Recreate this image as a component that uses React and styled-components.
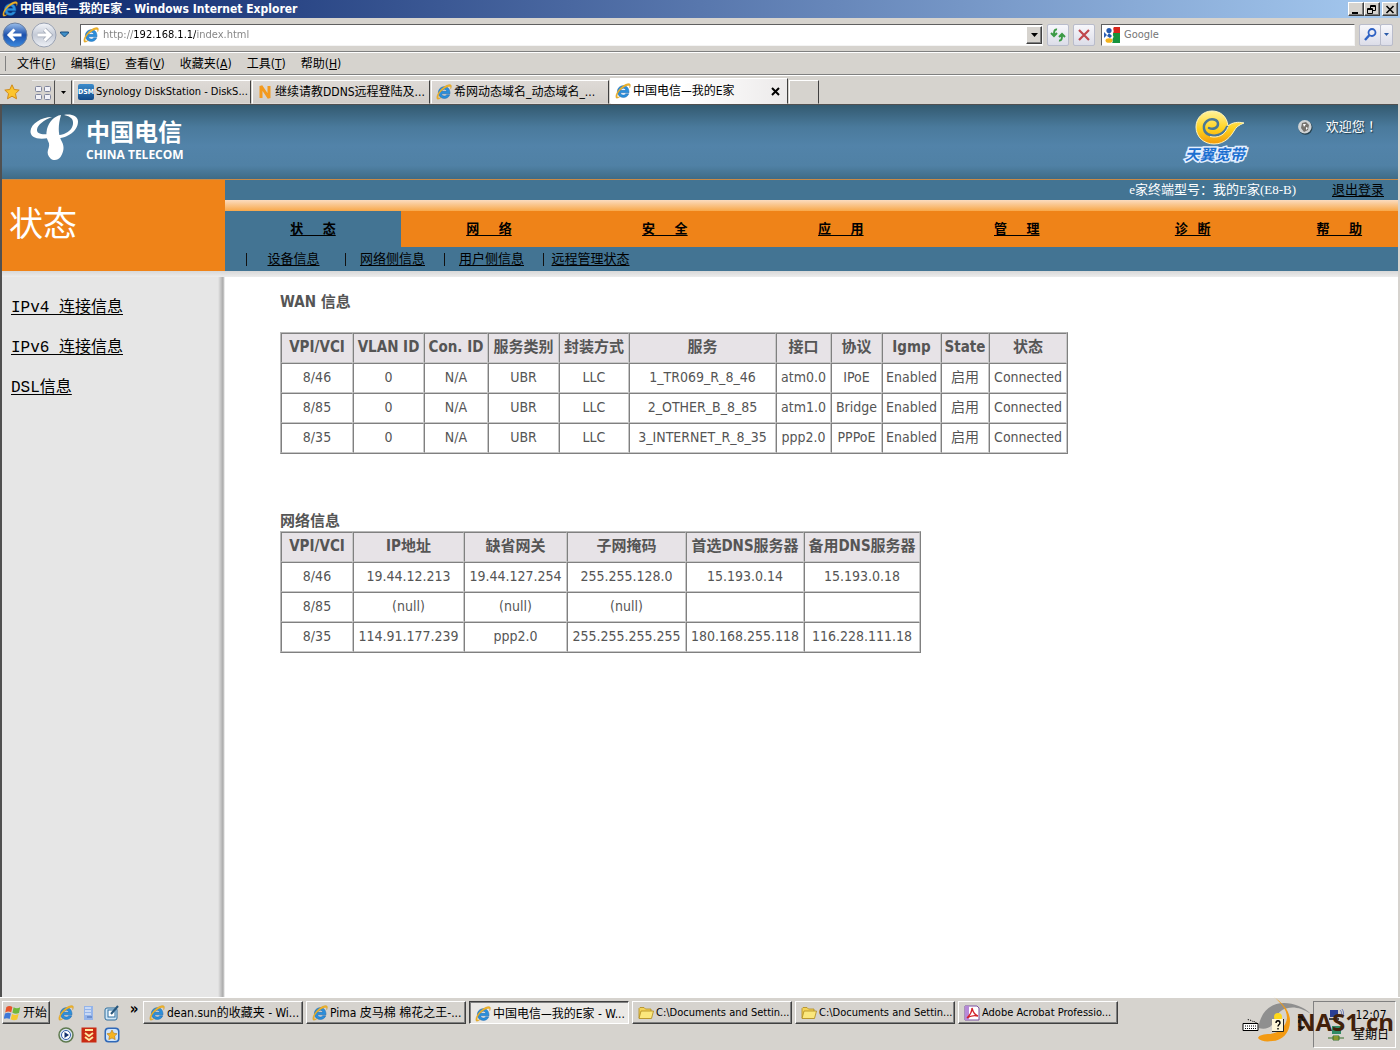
import React from 'react';
import styled, { createGlobalStyle, css } from 'styled-components';

const ui = `'DejaVu Sans Condensed', 'Noto Sans CJK SC', sans-serif`;
const song = `'Liberation Serif', 'Noto Sans CJK SC', serif`;
const face = '#d6d3ce';

const Global = createGlobalStyle`
  * { box-sizing: border-box; }
  body { margin: 0; background: ${face}; font: 11px/16px ${ui}; color: #000; }
  button, input { font: inherit; color: inherit; margin: 0; padding: 0; border: 0; background: none; }
  svg { display: block; flex: none; }
`;

const raised = css`
  background: ${face};
  border: 1px solid;
  border-color: #fff #404040 #404040 #fff;
  box-shadow: inset -1px -1px 0 #808080;
`;

const Window = styled.div`
  min-height: 100vh;
  display: flex;
  flex-direction: column;
`;

/* ---------- browser chrome ---------- */
const TitleBar = styled.header`
  height: 18px;
  display: flex;
  align-items: center;
  gap: 2px;
  padding: 0 2px;
  background: linear-gradient(90deg, #0a246a, #a6caf0);
`;
const Title = styled.h1`
  margin: 0;
  flex: 1;
  font: bold 12px/16px ${ui};
  color: #fff;
`;
const WinButtons = styled.div`
  display: flex;
  button:last-child { margin-left: 2px; }
`;
const WinButton = styled.button`
  ${raised}
  width: 16px;
  height: 14px;
  display: grid;
  place-items: center;
`;
const AddressRow = styled.div`
  height: 34px;
  display: flex;
  align-items: center;
  padding: 0 7px 0 2px;
  border-bottom: 1px solid #808080;
`;
const History = styled.div`
  display: flex;
  align-items: center;
  gap: 3px;
  margin-right: 11px;
`;
const Plain = styled.button`
  display: grid;
  place-items: center;
`;
const Field = styled.div`
  height: 22px;
  display: flex;
  align-items: center;
  gap: 4px;
  padding-left: 2px;
  background: #fff;
  border: 1px solid;
  border-color: #606060 #f4f4f4 #f4f4f4 #606060;
  ${p => p.$grow ? 'flex: 1;' : 'width: 254px; margin-left: 6px;'}
`;
const FieldInput = styled.input`
  flex: 1;
  min-width: 0;
  height: 20px;
  outline: 0;
  font-size: 11px;
  color: #777;
`;
const UrlInput = styled(FieldInput)`
  color: transparent;
  background: linear-gradient(90deg, #808080 31px, #000 31px, #000 93px, #808080 93px);
  background-clip: text;
  -webkit-background-clip: text;
`;
const DropButton = styled.button`
  ${raised}
  width: 16px;
  height: 18px;
  display: grid;
  place-items: center;
`;
const ToolButton = styled.button`
  width: ${p => p.$w || 22}px;
  height: 22px;
  display: grid;
  place-items: center;
  border: 1px solid #b9bccb;
  border-radius: 2px;
  background: linear-gradient(#f7f7fb, #dcdde8);
  margin-left: ${p => p.$gap ?? 4}px;
`;
const MenuBar = styled.nav`
  height: 23px;
  display: flex;
  align-items: center;
  gap: 15px;
  padding-left: 4px;
  border-top: 1px solid #fff;
  border-bottom: 1px solid #808080;
  button { font-size: 12px; }
`;
const Grip = styled.span`
  width: 2px;
  height: 15px;
  margin-right: -4px;
  border-right: 1px solid #808080;
`;
const TabRow = styled.div`
  height: 29px;
  display: flex;
  align-items: flex-end;
  padding-left: 4px;
  border-top: 1px solid #fff;
`;
const TabTool = styled.button`
  width: ${p => p.$w}px;
  height: 24px;
  display: grid;
  place-items: center;
  border-right: 1px solid #505050;
  border-top: 1px solid #eee;
  margin-right: 1px;
`;
const Favourite = styled(Plain)`
  width: 16px;
  height: 24px;
  margin-right: 12px;
`;
const Tab = styled.div`
  width: 178px;
  height: ${p => p.$active ? 26 : 24}px;
  display: flex;
  align-items: center;
  padding: 0 7px 0 4px;
  margin-right: 1px;
  border: 1px solid;
  border-color: #fff #404040 transparent #fff;
  background: ${p => p.$active ? 'linear-gradient(90deg, #fff 40%, #eceaea)' : 'linear-gradient(#dedad6, #d2cec9)'};
`;
const TabLabel = styled.button`
  flex: 1;
  min-width: 0;
  display: flex;
  align-items: center;
  gap: 2px;
  font-size: ${p => p.$han ? 12 : 11}px;
  white-space: nowrap;
`;
const NewTab = styled.button`
  width: 30px;
  height: 24px;
  border: 1px solid;
  border-color: #fff #404040 transparent #fff;
`;

/* ---------- web page ---------- */
const Page = styled.div`
  flex: 1;
  display: flex;
  flex-direction: column;
  border: solid #505050;
  border-width: 1px 0 0 2px;
  margin-right: 2px;
  background: #fff;
`;
const Banner = styled.div`
  height: 74px;
  display: flex;
  align-items: flex-start;
  padding: 5px 17px 0 28px;
  background: linear-gradient(#335a70, #4a7a9c 30%, #5283a9 55%, #5081a5 82%, #3e6b86);
`;
const Telecom = styled.div`
  display: flex;
  flex: 1;
  gap: 8px;
  padding-top: 4px;
  color: #fff;
`;
const TelecomName = styled.div`
  display: grid;
  align-content: start;
`;
const TelecomCn = styled.span`
  font: bold 24px/34px 'Noto Sans CJK SC', sans-serif;
`;
const TelecomEn = styled.span`
  font: bold 12px/14px 'Open Sans', sans-serif;
`;
const Tianyi = styled.div`
  display: flex;
  flex-direction: column;
  align-items: flex-end;
  margin-right: 52px;
`;
const TianyiName = styled.span`
  font: italic bold 15px/16px 'Noto Sans CJK SC', sans-serif;
  color: #1c6fd0;
  -webkit-text-stroke: 3px #e4f0ff;
  paint-order: stroke fill;
`;
const Welcome = styled.div`
  display: flex;
  align-items: center;
  gap: 13px;
  height: 34px;
  color: #fff;
  font: 13px/16px ${song};
  text-shadow: 1px 1px 1px #1f3b4b;
`;
const Head = styled.div`
  display: grid;
  grid-template-columns: 223px 1fr;
  border-top: 1px solid #c88a48;
`;
const Section = styled.h2`
  margin: 0;
  padding: 0 0 8px 7px;
  display: flex;
  align-items: center;
  background: #ef8318;
  color: #fff;
  font: 400 34px/40px 'Noto Sans CJK SC', sans-serif;
`;
const InfoBar = styled.div`
  height: 20px;
  display: flex;
  justify-content: flex-end;
  gap: 36px;
  padding-right: 14px;
  background: #437493;
  color: #fff;
  font: 13px/20px ${song};
`;
const Link = styled.a`
  color: #000;
  text-decoration: underline;
  text-underline-offset: 2px;
  white-space: pre;
`;
const Glow = styled.div`
  height: 11px;
  background: linear-gradient(#fbdcc0, #f8a84a);
`;
const MainNav = styled.nav`
  height: 36px;
  display: grid;
  grid-template-columns: repeat(6, 3fr) 2fr;
  background: #ef8318;
`;
const NavCell = styled.div`
  display: grid;
  place-items: center;
  font: bold 13px/16px ${song};
  background: ${p => p.$active ? '#437493' : 'transparent'};
`;
const SubNav = styled.nav`
  height: 24px;
  display: flex;
  align-items: center;
  padding-left: 21px;
  background: #437493;
  font: 13px/16px ${song};
`;
const SubItem = styled.div`
  width: 99px;
  display: flex;
  justify-content: center;
  align-items: center;
  padding-right: 5px;
  &::before { content: ''; width: 1px; height: 13px; background: #111; margin-right: auto; }
  a { margin-right: auto; }
`;
const Strip = styled.div`
  height: 6px;
  background: linear-gradient(#d8d8d8, #ececec);
`;
const Body = styled.div`
  flex: 1;
  display: grid;
  grid-template-columns: 223px 1fr;
`;
const Side = styled.nav`
  display: flex;
  flex-direction: column;
  padding: 11px 0 0 9px;
  background: linear-gradient(90deg, transparent 216px, #aaa 221px, #fff 223px), #e6e6e6;
  font: 16px/40px 'Liberation Mono', 'Noto Sans CJK SC', monospace;
`;
const Main = styled.main`
  padding: 15px 0 0 55px;
  color: #555;
  font-size: 14px;
`;
const Caption = styled.h3`
  margin: 0 0 ${p => p.$gap}px;
  font: bold 15px/20px ${ui};
`;
const Table = styled.table`
  table-layout: fixed;
  width: ${p => p.$w}px;
  border-collapse: separate;
  border-spacing: 0;
  border: 1px solid;
  border-color: #b8b8b8 #808080 #808080 #b8b8b8;
  margin-bottom: 57px;
  line-height: 20px;
  th, td {
    height: 30px;
    padding: 0 0 2px;
    text-align: center;
    white-space: nowrap;
    border: 1px solid;
    border-color: #808080 #c8c8c8 #c8c8c8 #808080;
  }
  th { background: #e7e3e7; font-size: 15px; }
`;

/* ---------- task bar ---------- */
const TaskBar = styled.footer`
  position: relative;
  height: 53px;
  display: flex;
  align-items: flex-start;
  padding: 3px 4px 0 2px;
  border-top: 1px solid #fff;
  background: ${face};
`;
const StartButton = styled.button`
  ${raised}
  width: 48px;
  height: 23px;
  display: flex;
  align-items: center;
  gap: 1px;
  padding-left: 1px;
  font-size: 12px;
`;
const Quick = styled.div`
  display: grid;
  grid-template-columns: repeat(3, 16px);
  gap: 6px 7px;
  padding: 4px 0 0 8px;
`;
const More = styled.button`
  width: 22px;
  padding: 2px 0 0 6px;
  font: bold 15px/12px ${ui};
`;
const Tasks = styled.div`
  flex: 1;
  display: flex;
  gap: 3px;
  margin-left: 1px;
`;
const Task = styled.button`
  ${raised}
  width: 160px;
  height: 23px;
  display: flex;
  align-items: center;
  gap: 2px;
  padding-left: 5px;
  font-size: ${p => p.$han ? 12 : 11}px;
  white-space: nowrap;
  ${p => p.$active && css`
    background: #ebe9e6;
    border-color: #404040 #fff #fff #404040;
    box-shadow: inset 1px 1px 0 #808080;
    padding-top: 2px;
  `}
`;
const Lang = styled.div`
  position: relative;
  z-index: 1;
  display: flex;
  align-items: center;
  gap: 12px;
  height: 47px;
  margin-right: 8px;
`;
const Tray = styled.div`
  width: 83px;
  height: 47px;
  display: flex;
  align-items: center;
  justify-content: space-between;
  padding: 0 6px 0 14px;
  border: 1px solid;
  border-color: #808080 #fff #fff #808080;
`;
const Clock = styled.time`
  font-size: 12px;
  line-height: 20px;
  text-align: center;
`;
const Watermark = styled.div`
  position: absolute;
  right: 6px;
  top: -3px;
  display: flex;
  align-items: flex-start;
  color: #42210b;
  font: bold 24px/54px 'Open Sans', sans-serif;
  svg { margin-right: -20px; }
`;

/* ---------- drawings ---------- */
const IE = () => (
  <svg width="16" height="16" viewBox="0 0 16 16">
    <path d="M14 9.800H5.600c.2 1.400 1.300 2.200 2.700 2.200 1.100 0 1.900-.4 2.400-1.200h3c-.8 2.400-2.800 3.600-5.400 3.600-3.500 0-5.900-2.300-5.900-5.800s2.500-5.900 5.900-5.900c3.600 0 5.800 2.500 5.700 7.100zM5.600 7.300h5.200C10.600 5.900 9.600 5.200 8.300 5.200S5.900 5.900 5.600 7.300z" fill="#2a8fdc" stroke="#1663ac" strokeWidth=".5" />
    <path d="M1.300 15.100C-.4 13 2.500 7.300 6.500 4 10.500.7 14.600-.3 15.300 1.500c.4 1-.1 2.300-.7 3.400.3-1.500.1-2.500-1.100-2.500-2 0-5 1.700-7.500 4.200-3 3-4.500 6.200-3.500 7.200.6.500 1.700.1 2.900-.5-1.700 1.500-3.300 2.500-4.100 1.800z" fill="#f0b429" stroke="#c9901d" strokeWidth=".3" />
  </svg>
);
const Down = ({ color = '#000' }) => (
  <svg width="7" height="4" viewBox="0 0 7 4"><path d="M0 0h7L3.500 4z" fill={color} /></svg>
);
const Arrow = ({ back }) => (
  <svg width="26" height="26" viewBox="0 0 26 26">
    <defs>
      <linearGradient id={back ? 'bk' : 'fw'} x1="0" y1="0" x2="0" y2="1">
        <stop offset="0" stopColor={back ? '#9cc0ec' : '#f4f6fa'} />
        <stop offset=".5" stopColor={back ? '#1c50ac' : '#c4cad6'} />
        <stop offset="1" stopColor={back ? '#3b8be0' : '#eef1f6'} />
      </linearGradient>
    </defs>
    <circle cx="13" cy="13" r="12" fill={`url(#${back ? 'bk' : 'fw'})`} stroke={back ? '#6b7f9f' : '#9aa2b2'} />
    <path d={back ? 'M19.500 13H7.500M12.500 7.500L7 13l5.500 5.500' : 'M6.500 13h12M13.500 7.500L19 13l-5.500 5.500'} fill="none" stroke={back ? 'none' : '#a0a7b5'} strokeWidth="4.500" />
    <path d={back ? 'M19.500 13H7.500M12.500 7.500L7 13l5.500 5.500' : 'M6.500 13h12M13.500 7.500L19 13l-5.500 5.500'} fill="none" stroke="#fff" strokeWidth="3" />
  </svg>
);
const Google = () => (
  <svg width="16" height="16" viewBox="0 0 16 16">
    <rect width="16" height="16" fill="#fff" />
    <path d="M9 0h7v6H9z" fill="#d8261c" /><path d="M9 6h7v10H8z" fill="#16933c" />
    <path d="M0 5l3 3-3 3z" fill="#2b5fb4" />
    <path d="M10 0c-2 2 1 4-1 6s2 3 0 5 1 3-1 5H3V0z" fill="#fff" />
    <circle cx="5" cy="3.500" r="2.600" fill="#2459ae" /><path d="M5 6l3 3-2 2-3-2z" fill="#2459ae" />
    <ellipse cx="5" cy="13.500" rx="3.500" ry="2.300" fill="#f4b21b" />
  </svg>
);
const Folder = () => (
  <svg width="16" height="16" viewBox="0 0 16 16">
    <path d="M1 13V3.500L2 2.500h4l1.500 1.500H13v9z" fill="#f3d35a" stroke="#b08a1c" strokeWidth=".8" />
    <path d="M1 13.500L3 6H15.500L13.500 13.500z" fill="#fbe77c" stroke="#b08a1c" strokeWidth=".8" />
  </svg>
);
const Flag = () => (
  <svg width="18" height="16" viewBox="1 1.500 15 13">
    <path d="M3 3c2-1.400 3.500-1 5 0L7 7.500C5.500 6.600 4 6.500 2 7.500z" fill="#e8542c" />
    <path d="M9 3.300c2 1 3.500 1 5.500 0L13.500 8c-2 .9-3.500.8-5.500-.2z" fill="#6fb83a" />
    <path d="M1.800 8.500c2-1 3.500-.9 5 0L5.700 13c-1.500-.9-3-1-5 0z" fill="#3d78d8" />
    <path d="M7.700 8.800c2 1 3.500 1 5.500.1L12 13.500c-2 .9-3.500.8-5.400-.2z" fill="#f6c92e" />
  </svg>
);
const Swirl = () => (
  <svg width="48" height="48" viewBox="0 0 48 48">
    <g fill="#fff">
      <path d="M22 3C11 3 1 10 .5 17c-.4 6.500 7 9 18 7l1-4C11 21 6.500 19.500 7 15.500 7.500 11 14 6 22 3z" />
      <path d="M31 1c-7 1-12 7-14 14-1 5-1 8 1 12 2 3 1 6 0 9-1 3 0 6 2.500 8.500C23.500 47 28 46.500 30.500 43 35 36 34 31 31 26c-3-6-3-15 0-25z" />
      <path d="M34 1c7-1.500 14 1 14 6.500C48 17 38 24 25 25c-5 .3-9-1-11-4 5 1 14 1 20-1 6-2.500 9.500-7 9-12-.3-4-4-6-9-7z" />
    </g>
  </svg>
);
const Bird = () => (
  <svg width="50" height="36" viewBox="0 0 50 36">
    <defs><linearGradient id="bird" x1="0" y1="0" x2="0" y2="1"><stop offset="0" stopColor="#fff29a" /><stop offset=".55" stopColor="#ffd21c" /><stop offset="1" stopColor="#f29a0c" /></linearGradient></defs>
    <path d="M17 1C8 1 1 8 1 17c0 10 8 17 18 17 11 0 17-8 20-13 2-4 5-6 10-8-6-1.500-12-.5-16 3-1-10-8-15-16-15z" fill="url(#bird)" stroke="#fff5c0" strokeWidth="1" />
    <path d="M32 17C29 24 22 27 15 25 8 23 7 15 12 11c4-3 11-2 11 3 0 4-5 6-9 4" fill="none" stroke="#4a7896" strokeWidth="2.500" strokeLinecap="round" />
    <path d="M33 17C30 25 23 28.500 15 26.500" fill="none" stroke="#fff5c0" strokeWidth="1" />
  </svg>
);
const Ball = () => (
  <svg width="16" height="16" viewBox="0 0 16 16">
    <circle cx="8.500" cy="8.800" r="7" fill="#25414f" /><circle cx="7.800" cy="7.800" r="6.800" fill="#cfd3d5" />
    <path d="M5 4l4-1 3 3-1 5-4 2-3-4z" fill="#77736e" /><path d="M6 5l3 0-2 3zM9 8l2 1-2 2z" fill="#fff" />
  </svg>
);
const Tile = ({ bg, children, r = 2 }) => (
  <svg width="16" height="16" viewBox="0 0 16 16"><rect x=".5" y=".5" width="15" height="15" rx={r} fill={bg} />{children}</svg>
);
const Dsm = styled.span`
  flex: none;
  width: 16px;
  height: 16px;
  border-radius: 2px;
  background: linear-gradient(#3c8ccc, #134a88);
  color: #fff;
  font: bold 7px/16px ${ui};
  text-align: center;
`;

const menus = [['文件', 'F'], ['编辑', 'E'], ['查看', 'V'], ['收藏夹', 'A'], ['工具', 'T'], ['帮助', 'H']];
const wide = '\u00a0'.repeat(6);
const nav = [`状${wide}态`, `网${wide}络`, `安${wide}全`, `应${wide}用`, `管${wide}理`, '诊\u00a0\u00a0\u00a0断', `帮${wide}助`];
const sub = ['设备信息', '网络侧信息', '用户侧信息', '远程管理状态'];

const wan = {
  widths: [72, 71, 64, 71, 70, 147, 55, 51, 59, 48, 78],
  head: ['VPI/VCI', 'VLAN ID', 'Con. ID', '服务类别', '封装方式', '服务', '接口', '协议', 'Igmp', 'State', '状态'],
  rows: [
    ['8/46', '0', 'N/A', 'UBR', 'LLC', '1_TR069_R_8_46', 'atm0.0', 'IPoE', 'Enabled', '启用', 'Connected'],
    ['8/85', '0', 'N/A', 'UBR', 'LLC', '2_OTHER_B_8_85', 'atm1.0', 'Bridge', 'Enabled', '启用', 'Connected'],
    ['8/35', '0', 'N/A', 'UBR', 'LLC', '3_INTERNET_R_8_35', 'ppp2.0', 'PPPoE', 'Enabled', '启用', 'Connected'],
  ],
};
const net = {
  widths: [72, 111, 103, 119, 118, 116],
  head: ['VPI/VCI', 'IP地址', '缺省网关', '子网掩码', '首选DNS服务器', '备用DNS服务器'],
  rows: [
    ['8/46', '19.44.12.213', '19.44.127.254', '255.255.128.0', '15.193.0.14', '15.193.0.18'],
    ['8/85', '(null)', '(null)', '(null)', '', ''],
    ['8/35', '114.91.177.239', 'ppp2.0', '255.255.255.255', '180.168.255.118', '116.228.111.18'],
  ],
};

const DataTable = ({ data, label }) => (
  <Table $w={data.widths.reduce((a, b) => a + b, 2)} aria-label={label}>
    <colgroup>{data.widths.map((w, i) => <col key={i} width={w} />)}</colgroup>
    <thead><tr>{data.head.map(h => <th key={h} scope="col">{h}</th>)}</tr></thead>
    <tbody>
      {data.rows.map(r => <tr key={r[0]}>{r.map((c, i) => <td key={i}>{c}</td>)}</tr>)}
    </tbody>
  </Table>
);

export default function App() {
  return (
    <Window>
      <Global />
      <TitleBar>
        <IE />
        <Title>中国电信—我的E家 - Windows Internet Explorer</Title>
        <WinButtons>
          <WinButton aria-label="最小化"><svg width="10" height="9"><path d="M1 8h6" stroke="#000" strokeWidth="2" /></svg></WinButton>
          <WinButton aria-label="还原"><svg width="10" height="9"><path d="M3.500 3V.5h5v5H6M3 1.500h6M.5 3.500h5v5h-5zM0 4.500h6" fill="none" stroke="#000" /></svg></WinButton>
          <WinButton aria-label="关闭"><svg width="10" height="9"><path d="M1.500 1l7 7M8.500 1l-7 7" stroke="#000" strokeWidth="1.600" /></svg></WinButton>
        </WinButtons>
      </TitleBar>

      <AddressRow>
        <History>
          <Plain aria-label="后退"><Arrow back /></Plain>
          <Plain aria-label="前进"><Arrow /></Plain>
          <Plain aria-label="最近的页面">
            <svg width="9" height="7"><path d="M.5 1h8v1L4.500 6 .5 2z" fill="#3f8fc8" stroke="#174a7c" /></svg>
          </Plain>
        </History>
        <Field $grow>
          <IE />
          <UrlInput aria-label="地址" defaultValue="http://192.168.1.1/index.html" />
          <DropButton aria-label="显示地址"><Down /></DropButton>
        </Field>
        <ToolButton aria-label="刷新">
          <svg width="16" height="14" viewBox="0 0 16 14" fill="none" stroke="#3b9a45" strokeWidth="2"><path d="M7 1.500C4.500 1 4 3 4 7M1 5l3 3 3-3M9 12.500c2.500.5 3-1.500 3-5.500M9 9l3-3 3 3" /></svg>
        </ToolButton>
        <ToolButton aria-label="停止">
          <svg width="12" height="12" viewBox="0 0 12 12"><path d="M1 1l10 10M11 1L1 11" stroke="#c0454b" strokeWidth="2.200" /></svg>
        </ToolButton>
        <Field>
          <Google />
          <FieldInput aria-label="搜索" placeholder="Google" />
        </Field>
        <ToolButton aria-label="搜索">
          <svg width="13" height="13" viewBox="0 0 13 13" fill="none" stroke="#2f62c4"><circle cx="8" cy="4.500" r="3.500" strokeWidth="1.800" /><path d="M5.500 7L1 12" strokeWidth="2.400" /></svg>
        </ToolButton>
        <ToolButton aria-label="搜索选项" $w={13} $gap={-1}><svg width="5" height="3"><path d="M0 0h5L2.500 3z" fill="#2a5aa8" /></svg></ToolButton>
      </AddressRow>

      <MenuBar>
        <Grip />
        {menus.map(([t, k]) => <button key={k}>{t}(<u>{k}</u>)</button>)}
      </MenuBar>

      <TabRow>
        <Favourite aria-label="收藏中心">
          <svg width="16" height="16" viewBox="0 0 16 16"><path d="M8 .8l2.200 4.700 5 .6-3.700 3.500 1 5.200L8 12.200l-4.500 2.600 1-5.200L.8 6.100l5-.6z" fill="#fcc52e" stroke="#d08a18" /></svg>
        </Favourite>
        <TabTool $w={23} aria-label="快速导航选项卡">
          <svg width="16" height="14" viewBox="0 0 16 14" fill="#f2f2f8" stroke="#7f849c"><rect x=".5" y=".5" width="6" height="5" rx="1" /><rect x="9.500" y=".5" width="6" height="5" rx="1" /><rect x=".5" y="8.500" width="6" height="5" rx="1" /><rect x="9.500" y="8.500" width="6" height="5" rx="1" /></svg>
        </TabTool>
        <TabTool $w={16} aria-label="选项卡列表"><svg width="5" height="3"><path d="M0 0h5L2.500 3z" /></svg></TabTool>
        <Tab><TabLabel><Dsm aria-hidden="true">DSM</Dsm>Synology DiskStation - DiskS...</TabLabel></Tab>
        <Tab>
          <TabLabel $han>
            <svg width="16" height="16" viewBox="0 0 16 16"><path d="M4 14V2l8 12V2" fill="none" stroke="#f39a1e" strokeWidth="3" strokeLinejoin="bevel" /></svg>
            继续请教DDNS远程登陆及...
          </TabLabel>
        </Tab>
        <Tab><TabLabel $han><IE />希网动态域名_动态域名_...</TabLabel></Tab>
        <Tab $active>
          <TabLabel $han><IE />中国电信—我的E家</TabLabel>
          <Plain aria-label="关闭选项卡"><svg width="9" height="9"><path d="M1 1l7 7M8 1L1 8" stroke="#000" strokeWidth="2" /></svg></Plain>
        </Tab>
        <NewTab aria-label="新选项卡" />
      </TabRow>

      <Page>
        <Banner>
          <Telecom>
            <Swirl />
            <TelecomName><TelecomCn>中国电信</TelecomCn><TelecomEn>CHINA TELECOM</TelecomEn></TelecomName>
          </Telecom>
          <Tianyi><Bird /><TianyiName>天翼宽带</TianyiName></Tianyi>
          <Welcome><Ball /><span>欢迎您 ！</span></Welcome>
        </Banner>
        <Head>
          <Section>状态</Section>
          <div>
            <InfoBar><span>e家终端型号：我的E家(E8-B)</span><Link href="#logout">退出登录</Link></InfoBar>
            <Glow />
            <MainNav>
              {nav.map((n, i) => <NavCell key={n} $active={i === 0}><Link href="#nav">{n}</Link></NavCell>)}
            </MainNav>
            <SubNav>
              {sub.map(s => <SubItem key={s}><Link href="#sub">{s}</Link></SubItem>)}
            </SubNav>
          </div>
        </Head>
        <Strip />
        <Body>
          <Side>
            <Link href="#ipv4">IPv4 连接信息</Link>
            <Link href="#ipv6">IPv6 连接信息</Link>
            <Link href="#dsl">DSL信息</Link>
          </Side>
          <Main>
            <Caption $gap={20}>WAN 信息</Caption>
            <DataTable data={wan} label="WAN 信息" />
            <Caption $gap={0}>网络信息</Caption>
            <DataTable data={net} label="网络信息" />
          </Main>
        </Body>
      </Page>

      <TaskBar>
        <StartButton><Flag />开始</StartButton>
        <Quick>
          <Plain aria-label="Internet Explorer"><IE /></Plain>
          <Plain aria-label="服务器"><svg width="16" height="16" viewBox="0 0 16 16"><path d="M3 1h9v14H3z" fill="#94b4ea" /><path d="M4 3h6M4 6h6M4 9h6" stroke="#fff" /><path d="M6 12h5" stroke="#4468b0" /></svg></Plain>
          <Plain aria-label="显示桌面"><svg width="16" height="16" viewBox="0 0 16 16"><rect x="1" y="3" width="12" height="12" rx="2" fill="#cfe6f7" stroke="#2c6c9c" /><rect x="4" y="5" width="7" height="7" fill="#fff" stroke="#2c6c9c" /><path d="M7 9l7-8" stroke="#27567c" strokeWidth="2" /></svg></Plain>
          <Plain aria-label="媒体播放器"><svg width="16" height="16" viewBox="0 0 16 16"><circle cx="8" cy="8" r="7" fill="#d9e4f2" stroke="#5e7a4e" strokeWidth="1.500" /><circle cx="8" cy="8" r="4.500" fill="#fff" stroke="#345fa8" /><path d="M6.500 5l4.500 3-4.500 3z" fill="#12306e" /></svg></Plain>
          <Plain aria-label="下载"><Tile bg="#c92a12" r={0}><path d="M4 3h8M4 6l4 3 4-3M4 10l4 3 4-3" fill="none" stroke="#ffe9a0" strokeWidth="2" /></Tile></Plain>
          <Plain aria-label="收藏"><Tile bg="#2f68b8" r={4}><rect x="2" y="2" width="12" height="12" rx="3" fill="#cfe4fa" /><path d="M8 3l1.600 3.200 3.500.5-2.500 2.400.6 3.500L8 11l-3.200 1.600.6-3.500-2.500-2.400 3.500-.5z" fill="#f6b420" stroke="#b87810" strokeWidth=".6" /></Tile></Plain>
        </Quick>
        <More aria-label="更多">»</More>
        <Tasks>
          <Task $han><IE />dean.sun的收藏夹 - Wi...</Task>
          <Task $han><IE />Pima 皮马棉 棉花之王-...</Task>
          <Task $han $active><IE />中国电信—我的E家 - W...</Task>
          <Task><Folder />C:\Documents and Settin...</Task>
          <Task><Folder />C:\Documents and Settin...</Task>
          <Task>
            <svg width="16" height="16" viewBox="0 0 16 16"><path d="M1 1h12l2 2v12H1z" fill="#fff" stroke="#7a50a0" /><path d="M1 1h4v14H1z" fill="#b78ad8" /><path d="M3 13c3-3 5-7 5-10 1 4 3 7 6 8-4-1-8 0-11 2z" fill="none" stroke="#d3202a" strokeWidth="1.300" /></svg>
            Adobe Acrobat Professio...
          </Task>
        </Tasks>
        <Lang>
          <svg width="17" height="14" viewBox="0 0 17 14"><path d="M1 5.500h15v7H1z" fill="#fff" stroke="#000" /><path d="M3 8h11M3 10.500h11" stroke="#000" strokeDasharray="1 1" /><path d="M14 5c0-2-3-1-4-2S6 2 5 1" fill="none" stroke="#000" strokeDasharray="1 1" /></svg>
          <svg width="14" height="14" viewBox="0 0 14 14"><path d="M1 1h12v12H1z" fill="#fdf6d8" /><path d="M12.500 1v12.500H1" fill="none" stroke="#222" /><path d="M5 5c0-3 4-3 4 0 0 1.500-2 1.500-2 3.500M7 10v1.500" fill="none" stroke="#000" strokeWidth="1.400" /></svg>
          <svg width="8" height="20" viewBox="0 0 8 20"><path d="M1 2h4v3h3M2 5v3M3 12h4l-2 2z" fill="none" stroke="#111" strokeWidth="1.500" /></svg>
        </Lang>
        <Tray>
          <svg width="16" height="34" viewBox="0 0 16 34">
            <path d="M2 2h8v7H2z" fill="#2a3f94" /><path d="M1 11h10" stroke="#444" strokeWidth="2" /><path d="M12 2c2 2 2 4 0 6M14 1c2 3 2 5 0 8" fill="none" stroke="#6a7ab8" />
            <path d="M4 18h9v8H4z" fill="#2f8a64" /><path d="M0 30h16M5 28h6v4H5z" stroke="#38702c" fill="#d8c030" />
          </svg>
          <Clock>12:07<br />星期日</Clock>
        </Tray>
        <Watermark>
          <svg width="60" height="50" viewBox="0 0 60 50">
            <path d="M2.500 33C4 18 14 8 28 8c10 0 20 4 27 11C46 13 38 11.500 32 13 22 15 20 22 18 27 15 33 9 35 2.500 33z" fill="#8f8f8f" />
            <path d="M17 1c9 7 17 14 17 25 0 12-8 20-18 20-6 1-12 0-14-3 1-3 6-4 12-4 10-1 16-8 17-16C31 14 25 8 17 1z" fill="#f39a12" />
            <circle cx="22" cy="22" r="4" fill="#ffd91a" />
          </svg>
          NAS1.cn
        </Watermark>
      </TaskBar>
    </Window>
  );
}
